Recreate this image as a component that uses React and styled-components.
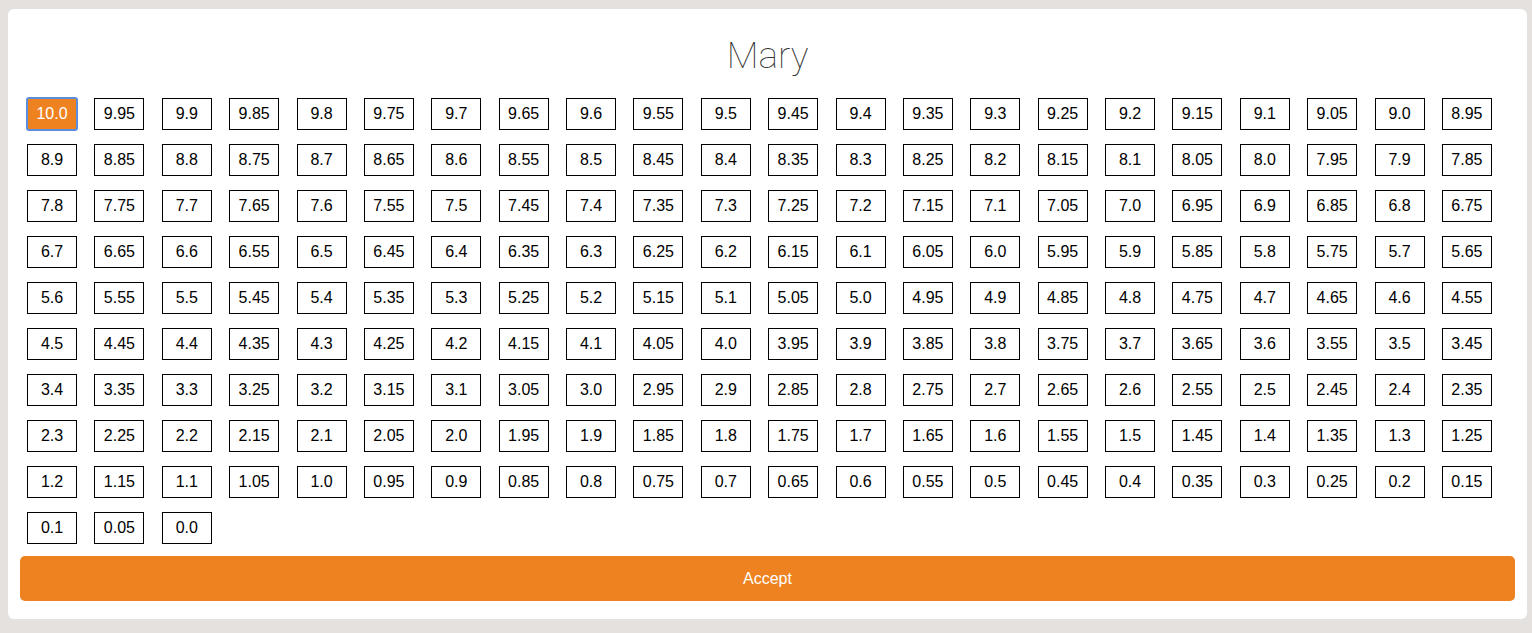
import React, { useState } from 'react'
import styled, { createGlobalStyle } from 'styled-components'

const GlobalStyle = createGlobalStyle`
  html, body {
    margin: 0;
    padding: 0;
    background: #e4e1de;
  }
  body {
    font-family: "Liberation Sans", Arial, sans-serif;
  }
`

const Card = styled.div`
  margin: 9px 5px 0 8px;
  background: #fff;
  border-radius: 6px;
  padding: 25px 12px 18px 12px;
  box-sizing: border-box;
`

const Title = styled.h1`
  margin: 0;
  font-family: Roboto, "Liberation Sans", sans-serif;
  font-weight: 100;
  font-size: 37px;
  line-height: 44px;
  color: #333;
  text-align: center;
`

const Grid = styled.div`
  display: grid;
  grid-template-columns: repeat(22, 50px);
  column-gap: 17.38px;
  row-gap: 14px;
  margin: 20px 0 0 7px;
`

const Score = styled.button`
  width: 50px;
  height: 32px;
  padding: 0;
  box-sizing: border-box;
  font-family: "Liberation Sans", Arial, sans-serif;
  font-size: 16px;
  cursor: pointer;
  border: 1px solid ${p => (p.$active ? '#ee8220' : '#000')};
  background: ${p => (p.$active ? '#ee8220' : '#fff')};
  color: ${p => (p.$active ? '#fff' : '#000')};
  border-radius: ${p => (p.$active ? '2px' : '0')};
  outline: ${p => (p.$active ? '2px solid #5a8edb' : 'none')};
  outline-offset: -1px;
`

const AcceptButton = styled.button`
  display: block;
  width: 100%;
  height: 45px;
  margin-top: 12px;
  border: none;
  border-radius: 5px;
  background: #ee8220;
  color: #fff;
  font-family: "Liberation Sans", Arial, sans-serif;
  font-size: 16px;
  cursor: pointer;
`

const scores = Array.from({ length: 201 }, (_, i) => {
  const v = (200 - i) * 0.05
  const s = v.toFixed(2)
  return s.endsWith('0') ? v.toFixed(1) : s
})

const App = () => {
  const [selected, setSelected] = useState('10.0')

  return (
    <>
      <GlobalStyle />
      <Card>
        <Title>Mary</Title>
        <Grid>
          {scores.map(s => (
            <Score key={s} $active={s === selected} onClick={() => setSelected(s)}>
              {s}
            </Score>
          ))}
        </Grid>
        <AcceptButton>Accept</AcceptButton>
      </Card>
    </>
  )
}

export default App
